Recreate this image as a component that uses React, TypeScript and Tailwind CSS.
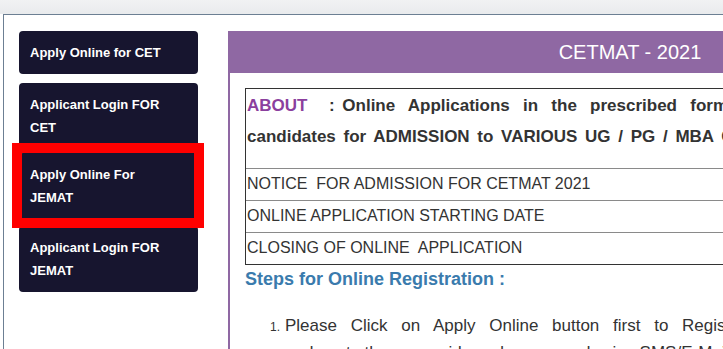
import React from 'react'

const menu = [
  { label: 'Apply Online for CET', mt: 'mt-0', lines: 1 },
  { label: 'Applicant Login FOR CET', mt: 'mt-[9px]', lines: 2 },
  { label: 'Apply Online For JEMAT', mt: 'mt-[4px]', lines: 2 },
  { label: 'Applicant Login FOR JEMAT', mt: 'mt-[7px]', lines: 2 },
]

const rows = ['NOTICE  FOR ADMISSION FOR CETMAT 2021', 'ONLINE APPLICATION STARTING DATE', 'CLOSING OF ONLINE  APPLICATION']

function Sidebar() {
  return (
    <div className="relative w-[179px] shrink-0">
      {menu.map((item) => (
        <div
          key={item.label}
          className={`${item.mt} rounded-[4px] bg-[#17152f] px-[11px] py-[10px] text-[13px] font-bold leading-[23px] text-white`}
        >
          <span className={item.lines === 2 ? 'block w-[135px]' : 'block'}>{item.label}</span>
        </div>
      ))}
      {/* red highlight drawn over the third item */}
      <div className="pointer-events-none absolute left-[-7px] top-[112px] h-[85px] w-[192px] border-[10px] border-[#ff0000]" />
    </div>
  )
}

function Content() {
  return (
    <div className="ml-[30px] w-[802px] shrink-0 border-l-2 border-[#8f68a3]">
      <div className="flex h-[42px] items-center justify-center bg-[#8f68a3] text-[20px] text-white">CETMAT - 2021</div>
      <div className="px-[15px] pt-[15px]">
        <div className="border border-[#333333] text-[#333333]">
          <div className="h-[79px] px-[1px] pt-[1px] text-[17px] font-bold leading-[31px]">
            <div className="whitespace-nowrap [word-spacing:8.5px]">
              <span className="text-[#8b3f9e]">ABOUT</span>
              <span className="[word-spacing:6px]">&nbsp; :</span>
              <span className="[word-spacing:3px]"> </span>Online Applications in the prescribed format are invited from eligible
            </div>
            <div className="whitespace-nowrap [word-spacing:3px]">
              candidates for ADMISSION to VARIOUS UG / PG / MBA Courses for the Academic Session 2021
            </div>
          </div>
          {rows.map((r) => (
            <div key={r} className="h-[32px] whitespace-pre border-t border-[#8a8a8a] px-[1px] text-[16px] leading-[30px]">
              {r}
            </div>
          ))}
        </div>
        <div className="mt-[3px] text-[18px] font-bold leading-[22px] text-[#3a7bad]">Steps for Online Registration :</div>
        <div className="mt-[22px] flex items-baseline pl-[25px] text-[#333333]">
          <span className="w-[15px] shrink-0 text-[12px]">1.</span>
          <span className="whitespace-nowrap text-[17px] leading-[27px] [word-spacing:9px]">
            Please Click on Apply Online button first to Register with your mobile number and email address
          </span>
        </div>
        <div className="pl-[40px] text-[17px] leading-[27px] text-[#333333] [word-spacing:9px]">and get the user id and password via SMS/E-Mail</div>
      </div>
    </div>
  )
}

export default function App() {
  return (
    <div className="h-[349px] w-[723px] overflow-hidden bg-white font-['Liberation_Sans',Arial,sans-serif]">
      <div className="h-[14px] bg-gradient-to-b from-[#f1f2f3] to-[#e9ebed]" />
      <div className="ml-[3px] flex border-l border-t border-[#6c7f93] pl-[15px] pt-[16px]">
        <Sidebar />
        <Content />
      </div>
    </div>
  )
}
